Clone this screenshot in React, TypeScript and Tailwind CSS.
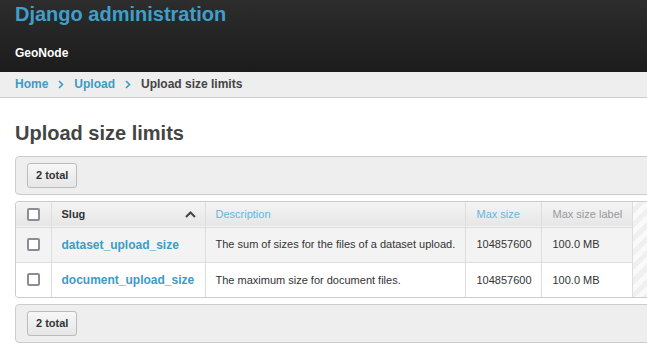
import React from 'react';

type Limit = {
  slug: string;
  description: string;
  maxSize: number;
  label: string;
};

const limits: Limit[] = [
  {
    slug: 'dataset_upload_size',
    description: 'The sum of sizes for the files of a dataset upload.',
    maxSize: 104857600,
    label: '100.0 MB',
  },
  {
    slug: 'document_upload_size',
    description: 'The maximum size for document files.',
    maxSize: 104857600,
    label: '100.0 MB',
  },
];

const Checkbox: React.FC = () => (
  <span className="block w-[13px] h-[13px] rounded-[2px] border-2 border-[#8c8c96] bg-white" />
);

const Crumb: React.FC = () => (
  <svg width="6" height="9" viewBox="0 0 6 9" className="mx-[10px]">
    <polyline points="1,1 4.5,4.5 1,8" fill="none" stroke="#3a9cc7" strokeWidth="1.6" />
  </svg>
);

const Toolbar: React.FC = () => (
  <div className="w-[660px] h-[39px] flex items-center px-[11px] bg-[#eeeeee] border border-[#cccccc] rounded-[4px]">
    <button className="h-[25px] px-[8px] text-[11px] font-bold text-[#333] bg-gradient-to-b from-[#f7f7f7] to-[#e6e6e6] border border-[#bbbbbb] rounded-[3px]">
      2 total
    </button>
  </div>
);

const App: React.FC = () => {
  return (
    <div className="w-[647px] h-[355px] overflow-hidden bg-white font-['Liberation_Sans',Arial,sans-serif]">
      {/* site header */}
      <div className="h-[72px] px-[15px] bg-gradient-to-b from-[#2d2d2d] to-[#1c1c1c]">
        <div className="pt-[2px] leading-6 text-[20px] font-bold text-[#3f9fca]">Django administration</div>
        <div className="mt-[19px] leading-4 text-[12px] font-bold text-white">GeoNode</div>
      </div>

      {/* breadcrumbs */}
      <div className="flex items-center px-[15px] pt-[4px] pb-[5px] leading-4 text-[12px] font-bold bg-[#eeeeee] border-b border-[#cccccc]">
        <span className="text-[#3a9cc7]">Home</span>
        <Crumb />
        <span className="text-[#3a9cc7]">Upload</span>
        <Crumb />
        <span className="text-[#444]">Upload size limits</span>
      </div>

      <div className="pl-[15px]">
        <h1 className="mt-[23px] mb-[11px] leading-6 text-[20px] font-bold text-[#444]">Upload size limits</h1>

        <Toolbar />

        {/* results */}
        <div className="mt-[6px] w-[660px] border-y border-l border-[#cccccc] rounded-l-[4px] overflow-hidden bg-[repeating-linear-gradient(135deg,#f0f0f0_0px,#f0f0f0_5px,#fafafa_5px,#fafafa_10px)]">
          <table className="table-fixed w-[616px] border-collapse bg-white text-[11px] text-[#333] whitespace-nowrap">
            <colgroup>
              <col className="w-[35px]" />
              <col className="w-[154px]" />
              <col className="w-[260px]" />
              <col className="w-[76px]" />
              <col className="w-[91px]" />
            </colgroup>
            <thead>
              <tr className="h-[25px] bg-gradient-to-b from-[#f4f4f4] to-[#e6e6e6] border-b border-[#dddddd]">
                <th className="pl-[11px] pr-0 text-left">
                  <Checkbox />
                </th>
                <th className="px-[10px] text-left border-l border-[#dddddd]">
                  <div className="flex items-center justify-between">
                    <span className="font-bold text-[#333]">Slug</span>
                    <svg width="11" height="7" viewBox="0 0 11 7" className="mr-[-1px]">
                      <polyline points="1,6 5.5,1.5 10,6" fill="none" stroke="#444" strokeWidth="2" />
                    </svg>
                  </div>
                </th>
                <th className="px-[10px] text-left font-normal text-[#66b6da] border-l border-[#dddddd]">Description</th>
                <th className="px-[11px] text-left font-normal text-[#66b6da] border-l border-[#dddddd]">Max size</th>
                <th className="px-[11px] text-left font-normal text-[#999] border-x border-[#dddddd]">Max size label</th>
              </tr>
            </thead>
            <tbody>
              {limits.map((l, i) => (
                <tr key={l.slug} className={i === 0 ? 'h-[35px] bg-[#f3f3f3] border-b border-[#dddddd]' : 'h-[35px] bg-white'}>
                  <td className="pl-[11px] pr-0">
                    <Checkbox />
                  </td>
                  <td className="px-[10px] border-l border-[#dddddd]">
                    <a className="text-[12px] font-bold text-[#3a9cc7]">{l.slug}</a>
                  </td>
                  <td className="px-[10px] border-l border-[#dddddd]">{l.description}</td>
                  <td className="px-[11px] border-l border-[#dddddd]">{l.maxSize}</td>
                  <td className="px-[11px] border-x border-[#dddddd]">{l.label}</td>
                </tr>
              ))}
            </tbody>
          </table>
        </div>

        <div className="mt-[6px]">
          <Toolbar />
        </div>
      </div>
    </div>
  );
};

export default App;
